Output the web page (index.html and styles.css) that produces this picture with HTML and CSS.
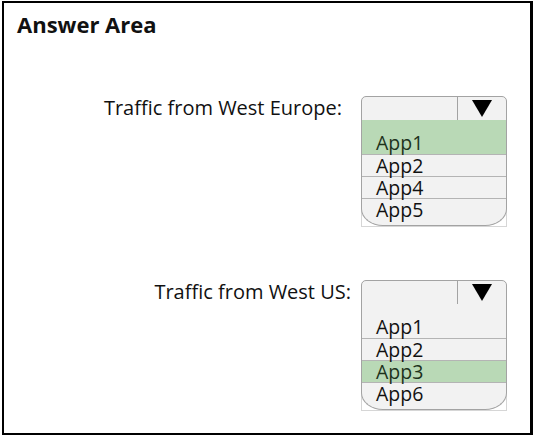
FILE: index.html
```html
<!DOCTYPE html>
<html>
<head>
  <title>Answer Area</title>
  <link rel="stylesheet" href="styles.css">
</head>
<body>
  <div class="frame">
    <h1>Answer Area</h1>

    <div class="question">
      <span class="label">Traffic from West Europe:</span>
      <div class="select">
        <div class="select-head">
          <div class="select-field"></div>
          <div class="select-btn"><span class="arrow"></span></div>
        </div>
        <div class="select-box">
          <ul class="select-list">
            <li class="opt opt-first selected">App1</li>
            <li class="opt">App2</li>
            <li class="opt">App4</li>
            <li class="opt opt-last">App5</li>
          </ul>
        </div>
      </div>
    </div>

    <div class="question question-us">
      <span class="label">Traffic from West US:</span>
      <div class="select">
        <div class="select-head">
          <div class="select-field"></div>
          <div class="select-btn"><span class="arrow"></span></div>
        </div>
        <div class="select-box">
          <ul class="select-list">
            <li class="opt opt-first">App1</li>
            <li class="opt">App2</li>
            <li class="opt selected">App3</li>
            <li class="opt opt-last">App6</li>
          </ul>
        </div>
      </div>
    </div>
  </div>
</body>
</html>
```

FILE: styles.css
```css
body, html {
  margin: 0;
  background: #fff;
}

body {
  font-family: "Open Sans", "Noto Sans", sans-serif;
  color: #111;
}

.frame {
  margin: 1px 0 0 2px;
  width: 531px;
  height: 434px;
  box-sizing: border-box;
  border: 2px solid #000;
  border-right-width: 3px;
  padding: 6px 0 0 13px;
}

h1 {
  margin: 0;
  font-size: 22px;
  font-weight: 700;
  line-height: 30px;
}

.question {
  display: flex;
  justify-content: flex-end;
  align-items: flex-start;
  margin-top: 57px;
  padding-right: 23px;
}

.question-us {
  margin-top: 53px;
}

.label {
  font-size: 20px;
  line-height: 24px;
  margin-right: 19px;
}

.question-us .label {
  margin-right: 10px;
}

.select {
  width: 146px;
}

.select-head {
  display: flex;
  height: 25px;
  box-sizing: border-box;
  border: 1px solid #a3a3a3;
  border-radius: 5px 5px 0 0;
  background: #f2f2f2;
}

.select-field {
  flex: 1;
}

.select-btn {
  width: 48px;
  border-left: 1px solid #a3a3a3;
  display: flex;
  justify-content: center;
  align-items: center;
}

.arrow {
  width: 0;
  height: 0;
  border-left: 10px solid transparent;
  border-right: 10px solid transparent;
  border-top: 17px solid #000;
}

.select-box {
  border: 1px solid #d6d6d6;
  border-top: none;
}

.select-list {
  list-style: none;
  margin: -1px -1px 0;
  padding: 0;
  border: 1px solid #a3a3a3;
  border-top: none;
  border-radius: 0 0 22px 22px / 0 0 17px 17px;
  background: #f2f2f2;
  overflow: hidden;
}

.opt {
  font-size: 19.5px;
  line-height: 21px;
  padding: 0 0 0 14px;
  border-top: 1px solid #b4b4b4;
}

.opt-first {
  border-top: none;
  padding-top: 12px;
  line-height: 22px;
}

.opt-last {
  padding-bottom: 5px;
}

.selected {
  background: #b9d9b6;
  color: #1d321c;
}
```
